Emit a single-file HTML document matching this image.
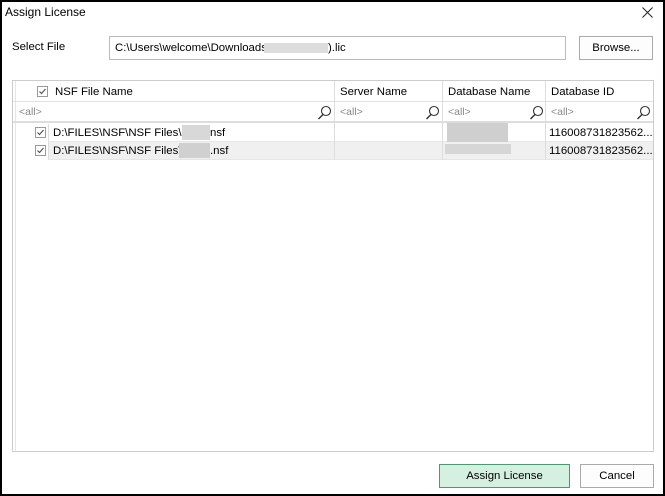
<!DOCTYPE html>
<html><head><style>
*{box-sizing:border-box;margin:0;padding:0}
body{width:665px;height:496px;background:#000;font-family:"Liberation Sans",sans-serif;font-size:11.4px;color:#000;position:relative;overflow:hidden}
.win{position:absolute;left:2px;top:2px;width:661px;height:492px;background:#fff}
.a{position:absolute;white-space:nowrap}
.cb{position:absolute;width:11px;height:11px;border:1px solid #999;background:#fff}
.cb svg{position:absolute;left:0;top:0}
.blur{position:absolute;background:#d4d4d4}
.mag{position:absolute}
</style></head><body>
<div class="win">
<div class="a" style="left:3px;top:3px;font-size:12px">Assign License</div>
<svg class="a" style="left:640px;top:5px" width="11" height="11"><path d="M0.5 0.5L10.5 10.5M10.5 0.5L0.5 10.5" stroke="#222" stroke-width="1"/></svg>
<div class="a" style="left:10px;top:39px">Select File</div>
<div class="a" style="left:107px;top:34px;width:457px;height:24px;border:1px solid #bbb"><span style="position:absolute;left:5px;top:5px">C:\Users\welcome\Downloads\</span><span class="blur" style="left:154px;top:6px;width:64px;height:10px;background:#ddd"></span><span style="position:absolute;left:218px;top:5px">).lic</span></div>
<div class="a" style="left:577px;top:34px;width:74px;height:24px;border:1px solid #aaa;background:#fdfdfd;text-align:center;line-height:22px">Browse...</div>

<div class="a" style="left:10px;top:78px;width:642px;height:372px;border:1px solid #ccc">
 <div class="a" style="left:2px;top:0;width:1px;height:370px;background:#e6e6e6"></div>
 <div class="a" style="left:0;top:0;width:640px;height:21px;border-bottom:1px solid #e0e0e0"></div>
 <div class="cb" style="left:24px;top:5px"><svg width="9" height="9"><path d="M1.5 4.5l2 2 4-4.5" stroke="#555" fill="none" stroke-width="1.2"/></svg></div>
 <div class="a" style="left:42px;top:5px">NSF File Name</div>
 <div class="a" style="left:321px;top:0;width:1px;height:78px;background:#ddd"></div>
 <div class="a" style="left:429px;top:0;width:1px;height:78px;background:#ddd"></div>
 <div class="a" style="left:532px;top:0;width:1px;height:78px;background:#ddd"></div>
 <div class="a" style="left:327px;top:5px">Server Name</div>
 <div class="a" style="left:435px;top:5px">Database Name</div>
 <div class="a" style="left:538px;top:5px">Database ID</div>
 <div class="a" style="left:0;top:22px;width:640px;height:20px;border-bottom:2px solid #ddd"></div>
 <div class="a" style="left:6px;top:25px;color:#888;font-size:10.5px">&lt;all&gt;</div>
 <div class="a" style="left:327px;top:25px;color:#888;font-size:10.5px">&lt;all&gt;</div>
 <div class="a" style="left:435px;top:25px;color:#888;font-size:10.5px">&lt;all&gt;</div>
 <div class="a" style="left:538px;top:25px;color:#888;font-size:10.5px">&lt;all&gt;</div>
 <svg class="mag" style="left:304px;top:24px" width="15" height="16"><circle cx="9" cy="6" r="4.5" stroke="#333" fill="none" stroke-width="1.1"/><path d="M6 9.5L1.5 14" stroke="#333" stroke-width="1.4"/></svg>
 <svg class="mag" style="left:412px;top:24px" width="15" height="16"><circle cx="9" cy="6" r="4.5" stroke="#333" fill="none" stroke-width="1.1"/><path d="M6 9.5L1.5 14" stroke="#333" stroke-width="1.4"/></svg>
 <svg class="mag" style="left:516px;top:24px" width="15" height="16"><circle cx="9" cy="6" r="4.5" stroke="#333" fill="none" stroke-width="1.1"/><path d="M6 9.5L1.5 14" stroke="#333" stroke-width="1.4"/></svg>
 <svg class="mag" style="left:623px;top:24px" width="15" height="16"><circle cx="9" cy="6" r="4.5" stroke="#333" fill="none" stroke-width="1.1"/><path d="M6 9.5L1.5 14" stroke="#333" stroke-width="1.4"/></svg>
 <div class="a" style="left:35px;top:43px;width:605px;height:18px;border-bottom:1px solid #e6e6e6;border-left:1px solid #ddd"></div>
 <div class="a" style="left:35px;top:61px;width:605px;height:18px;background:#f0f0f0;border-bottom:1px solid #e6e6e6;border-left:1px solid #ddd"></div>
 <div class="a" style="left:321px;top:43px;width:1px;height:36px;background:#ddd"></div>
 <div class="a" style="left:429px;top:43px;width:1px;height:36px;background:#ddd"></div>
 <div class="a" style="left:532px;top:43px;width:1px;height:36px;background:#ddd"></div>
 <div class="cb" style="left:22px;top:46px"><svg width="9" height="9"><path d="M1.5 4.5l2 2 4-4.5" stroke="#555" fill="none" stroke-width="1.2"/></svg></div>
 <div class="cb" style="left:22px;top:64px"><svg width="9" height="9"><path d="M1.5 4.5l2 2 4-4.5" stroke="#555" fill="none" stroke-width="1.2"/></svg></div>
 <div class="a" style="left:40px;top:46px">D:\FILES\NSF\NSF Files\</div>
 <div class="blur" style="left:169px;top:44px;width:28px;height:15px;background:#d8d8d8"></div>
 <div class="a" style="left:197px;top:46px">nsf</div>
 <div class="a" style="left:40px;top:64px">D:\FILES\NSF\NSF Files\</div>
 <div class="blur" style="left:166px;top:62px;width:31px;height:15px;background:#d0d0d0"></div>
 <div class="a" style="left:197px;top:64px">.nsf</div>
 <div class="blur" style="left:434px;top:42px;width:61px;height:19px;background:#cfcfcf"></div>
 <div class="blur" style="left:432px;top:63px;width:66px;height:10px;background:#d6d6d6"></div>
 <div class="a" style="left:536px;top:46px">116008731823562...</div>
 <div class="a" style="left:536px;top:64px">116008731823562...</div>
</div>

<div class="a" style="left:437px;top:462px;width:131px;height:24px;border:1px solid #4a9a70;background:#d5f0e0;text-align:center;line-height:22px">Assign License</div>
<div class="a" style="left:578px;top:462px;width:74px;height:24px;border:1px solid #aaa;background:#fdfdfd;text-align:center;line-height:22px">Cancel</div>
</div>
</body></html>
